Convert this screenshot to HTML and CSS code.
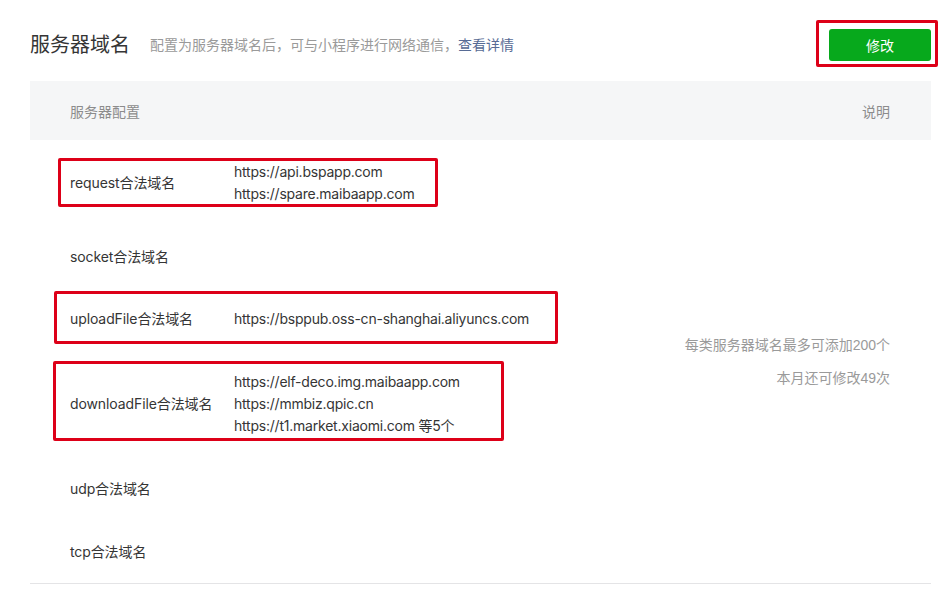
FILE: index.html
```html
<!DOCTYPE html>
<html lang="zh-CN">
<head>
<meta charset="utf-8">
<title>服务器域名</title>
<link rel="stylesheet" href="styles.css">
</head>
<body>
<div class="page">
  <div class="topbar">
    <div class="heading">
      <h2 class="title">服务器域名</h2>
      <span class="desc">配置为服务器域名后，可与小程序进行网络通信，<a class="link" href="#">查看详情</a></span>
    </div>
    <button class="btn">修改</button>
  </div>
  <table class="tbl">
    <thead>
      <tr>
        <th class="th-left" colspan="2">服务器配置</th>
        <th class="th-right">说明</th>
      </tr>
    </thead>
    <tbody>
      <tr>
        <td class="label">request合法域名</td>
        <td class="value"><div>https://api.bspapp.com</div><div>https://spare.maibaapp.com</div></td>
        <td class="note" rowspan="6">
          <p class="note-line">每类服务器域名最多可添加200个</p>
          <p class="note-line">本月还可修改49次</p>
        </td>
      </tr>
      <tr>
        <td class="label">socket合法域名</td>
        <td class="value"></td>
      </tr>
      <tr>
        <td class="label">uploadFile合法域名</td>
        <td class="value"><div>https://bsppub.oss-cn-shanghai.aliyuncs.com</div></td>
      </tr>
      <tr>
        <td class="label">downloadFile合法域名</td>
        <td class="value"><div>https://elf-deco.img.maibaapp.com</div><div>https://mmbiz.qpic.cn</div><div>https://t1.market.xiaomi.com 等5个</div></td>
      </tr>
      <tr>
        <td class="label">udp合法域名</td>
        <td class="value"></td>
      </tr>
      <tr>
        <td class="label">tcp合法域名</td>
        <td class="value"></td>
      </tr>
    </tbody>
  </table>
  <div class="mark mark-btn"></div>
  <div class="mark mark-request"></div>
  <div class="mark mark-upload"></div>
  <div class="mark mark-download"></div>
</div>
</body>
</html>
```
FILE: styles.css
```css
* { box-sizing: border-box; }
html, body { margin: 0; padding: 0; background: #fff; }
body {
  font-family: "Liberation Sans", "Noto Sans CJK SC", sans-serif;
  font-size: 14px;
  color: #353535;
}
.page {
  position: relative;
  width: 952px;
  height: 591px;
  padding: 29px 21px 0 30px;
  overflow: hidden;
}
.topbar {
  display: flex;
  align-items: center;
  justify-content: space-between;
  height: 32px;
  margin-bottom: 20px;
}
.heading {
  display: flex;
  align-items: center;
}
.title {
  margin: 0;
  font-size: 20px;
  font-weight: normal;
  color: #353535;
  line-height: 28px;
}
.desc {
  margin-left: 20px;
  font-size: 14px;
  color: #9a9a9a;
  line-height: 20px;
}
.link {
  color: #576b95;
  text-decoration: none;
}
.btn {
  width: 102px;
  height: 32px;
  border: 0;
  border-radius: 3px;
  background: #07a91c;
  color: #fff;
  font-family: "Noto Sans CJK SC", sans-serif;
  font-size: 14px;
  padding: 0;
}
.tbl {
  width: 901px;
  border-collapse: collapse;
  border-bottom: 1px solid #e4e4e6;
}
.tbl th {
  background: #f5f6f7;
  height: 59px;
  font-weight: normal;
  color: #8c8c8c;
  font-size: 14px;
  padding: 0;
}
.th-left { text-align: left; padding-left: 40px !important; }
.th-right { text-align: right; padding-right: 41px !important; }
.tbl td {
  padding: 20.7px 0 20.2px;
  line-height: 22px;
  vertical-align: middle;
}
.label {
  width: 204px;
  padding-left: 40px !important;
  white-space: nowrap;
  font-family: "Inter", "Noto Sans CJK SC", sans-serif;
  letter-spacing: -0.1px;
}
.value {
  width: 420px;
  white-space: nowrap;
  font-family: "Inter", "Noto Sans CJK SC", sans-serif;
  letter-spacing: -0.22px;
}
.note {
  text-align: right;
  padding-right: 41px !important;
  color: #9a9a9a;
}
.note-line {
  margin: 0;
  line-height: 22px;
}
.note-line + .note-line { margin-top: 11px; }
.mark {
  position: absolute;
  border: 3px solid #dd0018;
  border-radius: 2px;
}
.mark-btn { left: 816px; top: 20px; width: 122px; height: 47px; }
.mark-request { left: 58px; top: 158px; width: 380px; height: 49px; }
.mark-upload { left: 54px; top: 291px; width: 504px; height: 53px; }
.mark-download { left: 53px; top: 361px; width: 451px; height: 80px; }
```
